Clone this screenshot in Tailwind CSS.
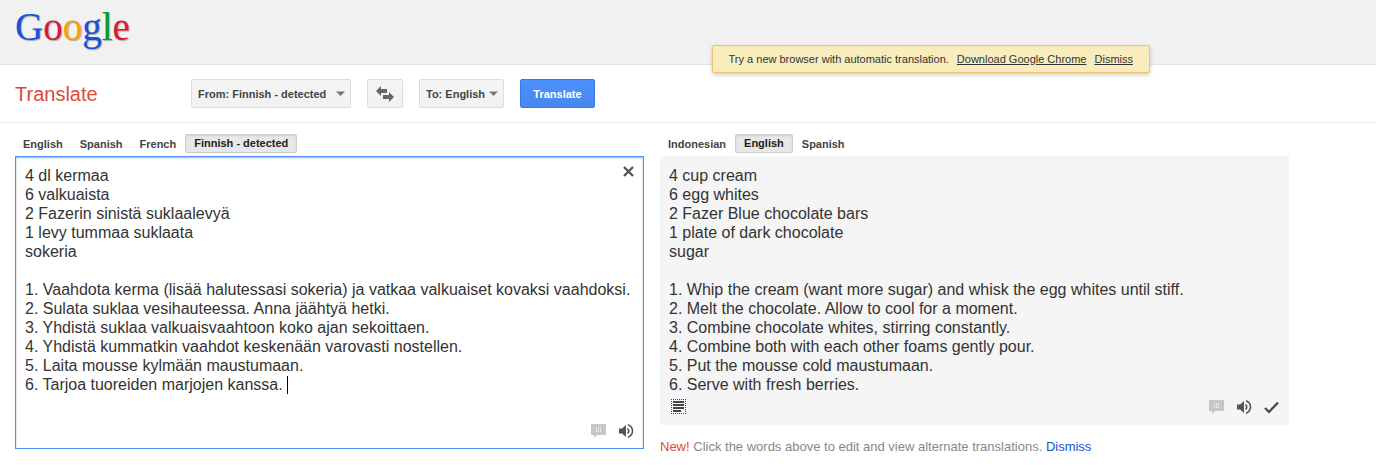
<!DOCTYPE html>
<html lang="en">
<head>
    <meta charset="UTF-8">
    <meta name="viewport" content="width=device-width, initial-scale=1.0">
    <title>Google Translate</title>
    <script src="https://cdn.jsdelivr.net/npm/@tailwindcss/browser@4"></script>
</head>
<body class="bg-white font-['Liberation_Sans',Arial,sans-serif] text-[#333]">
    <!-- Top bar -->
    <header class="relative h-[65px] bg-[#f1f1f1] border-b border-[#e5e5e5] px-[15px]">
        <a href="#" aria-label="Google" class="inline-block pt-[7px] font-['Liberation_Serif',serif] text-[39px] leading-10 text-shadow-[1px_1px_1px_rgb(0_0_0/0.3)]"><span class="text-[#1a50e0]">G</span><span class="text-[#dd1830]">o</span><span class="text-[#f5a300]">o</span><span class="text-[#1a50e0]">g</span><span class="text-[#0a9a1c]">l</span><span class="text-[#dd1830]">e</span></a>

        <div class="absolute top-[45px] right-[226px] flex h-7 items-center gap-2 rounded-xs border border-[#f0c36d] bg-[#f9edbe] px-4 text-[11px] whitespace-nowrap shadow-[0_2px_4px_rgba(0,0,0,0.2)]">
            <span>Try a new browser with automatic translation.</span>
            <a href="#" class="underline">Download Google Chrome</a>
            <button type="button" class="underline">Dismiss</button>
        </div>
    </header>

    <!-- Language toolbar -->
    <form class="flex h-[58px] items-center gap-4 border-b border-[#ebebeb] px-[15px] text-[11px] font-bold text-[#444]">
        <h1 class="w-40 text-xl font-normal text-[#dd4b39]">Translate</h1>
        <div class="relative">
            <select aria-label="From" class="h-[29px] w-40 appearance-none rounded-xs border border-[#dcdcdc] bg-linear-to-b from-[#f5f5f5] to-[#f1f1f1] pt-0.5 pl-1.5">
                <option>From: Finnish - detected</option>
            </select>
            <svg class="pointer-events-none absolute top-3 right-1.5 h-[5px] w-[9px]" viewBox="0 0 9 5" fill="#777"><path d="M0 0.5h9L4.5 5z"/></svg>
        </div>
        <button type="button" aria-label="Swap languages" class="flex h-[29px] w-9 items-center justify-center rounded-xs border border-[#dcdcdc] bg-linear-to-b from-[#f5f5f5] to-[#f1f1f1]">
            <svg class="h-4 w-[18px]" viewBox="0 0 18 16" fill="#666"><path d="M0 5L5 0V3H11V7H5V10zM18 11L13 6V9H7V13H13V16z"/></svg>
        </button>
        <div class="relative">
            <select aria-label="To" class="h-[29px] w-[85px] appearance-none rounded-xs border border-[#dcdcdc] bg-linear-to-b from-[#f5f5f5] to-[#f1f1f1] pt-0.5 pl-1.5">
                <option>To: English</option>
            </select>
            <svg class="pointer-events-none absolute top-3 right-1.5 h-[5px] w-[9px]" viewBox="0 0 9 5" fill="#777"><path d="M0 0.5h9L4.5 5z"/></svg>
        </div>
        <button type="button" class="h-[29px] w-[75px] rounded-xs border border-[#3079ed] bg-linear-to-b from-[#4d90fe] to-[#4787ed] pt-0.5 text-white">Translate</button>
    </form>

    <main class="grid grid-cols-2 items-start gap-4 pt-[11px] pr-[87px] pl-[15px]">
        <!-- Source -->
        <section>
            <div class="mb-[3px] flex h-[19px] gap-px text-[11px] font-bold text-[#444]">
                <button type="button" class="px-2 pt-0.5">English</button>
                <button type="button" class="px-2 pt-0.5">Spanish</button>
                <button type="button" class="px-2 pt-0.5">French</button>
                <button type="button" class="rounded-xs border border-[#ccc] bg-[#e8e8e8] px-2 text-[#222] inset-shadow-[0_1px_2px_rgba(0,0,0,0.1)]">Finnish - detected</button>
            </div>
            <div class="relative border border-[#4d90fe] inset-shadow-[0_1px_2px_rgba(0,0,0,0.3)]">
                <textarea aria-label="Source text" rows="12" class="block w-full resize-none overflow-hidden bg-transparent pt-[9px] pl-[9px] text-base leading-[19px] outline-none">4 dl kermaa
6 valkuaista
2 Fazerin sinistä suklaalevyä
1 levy tummaa suklaata
sokeria

1. Vaahdota kerma (lisää halutessasi sokeria) ja vatkaa valkuaiset kovaksi vaahdoksi.
2. Sulata suklaa vesihauteessa. Anna jäähtyä hetki.
3. Yhdistä suklaa valkuaisvaahtoon koko ajan sekoittaen.
4. Yhdistä kummatkin vaahdot keskenään varovasti nostellen.
5. Laita mousse kylmään maustumaan.
6. Tarjoa tuoreiden marjojen kanssa. </textarea>
                <!-- text cursor -->
                <span class="absolute top-[219px] left-[271px] h-[18px] w-px bg-black"></span>
                <button type="button" aria-label="Clear text" class="absolute top-[9px] right-[9px]">
                    <svg class="h-[11px] w-[11px]" viewBox="0 0 11 11" fill="none" stroke="#555" stroke-width="2.4"><path d="M1 1l9 9M10 1l-9 9"/></svg>
                </button>
                <div class="flex h-[54px] items-end justify-end gap-3 pr-[9px] pb-[9px]">
                    <button type="button" aria-label="Input tools">
                        <svg class="h-4 w-4" viewBox="0 0 16 16"><path fill="#c6c6c6" d="M1 1h15v11H7l-3 3v-3H1z"/><path stroke="#fff" stroke-dasharray="1 1" d="M6 4.5h5M6 6.5h5M6 8.5h5"/></svg>
                    </button>
                    <button type="button" aria-label="Listen">
                        <svg class="h-4 w-4" viewBox="0 0 16 16"><path fill="#555" d="M1 5.500h3L8 2v12L4 10.500H1z"/><path fill="none" stroke="#555" stroke-width="1.600" d="M9.500 5.500Q12 8 9.500 10.500M10 1.800Q14.500 3.500 14.500 8T10 14.200"/></svg>
                    </button>
                </div>
            </div>
        </section>

        <!-- Translation -->
        <section>
            <div class="mb-[3px] flex h-[19px] gap-px text-[11px] font-bold text-[#444]">
                <button type="button" class="px-2 pt-0.5">Indonesian</button>
                <button type="button" class="rounded-xs border border-[#ccc] bg-[#e8e8e8] px-2 text-[#222] inset-shadow-[0_1px_2px_rgba(0,0,0,0.1)]">English</button>
                <button type="button" class="px-2 pt-0.5">Spanish</button>
            </div>
            <div class="bg-[#f5f5f5] pt-2.5">
                <p class="px-[9px] text-base leading-[19px] whitespace-pre-line">4 cup cream
6 egg whites
2 Fazer Blue chocolate bars
1 plate of dark chocolate
sugar

1. Whip the cream (want more sugar) and whisk the egg whites until stiff.
2. Melt the chocolate. Allow to cool for a moment.
3. Combine chocolate whites, stirring constantly.
4. Combine both with each other foams gently pour.
5. Put the mousse cold maustumaan.
6. Serve with fresh berries.</p>
                <div class="flex h-[31px] items-start gap-3 pt-[5px] pr-[9px] pl-2.5">
                    <button type="button" aria-label="Show text alignment" class="mr-auto">
                        <svg class="h-4 w-4" viewBox="0 0 16 16" fill="none" stroke="#444"><path stroke-dasharray="1 1" d="M1 .5h15M1 14.5h15M1.500 0v15M15.500 0v15"/><path stroke-width="2" d="M3 3h11M3 6h11M3 9h11M3 12h8"/></svg>
                    </button>
                    <button type="button" aria-label="Input tools">
                        <svg class="h-4 w-4" viewBox="0 0 16 16"><path fill="#c6c6c6" d="M1 1h15v11H7l-3 3v-3H1z"/><path stroke="#fff" stroke-dasharray="1 1" d="M6 4.5h5M6 6.5h5M6 8.5h5"/></svg>
                    </button>
                    <button type="button" aria-label="Listen">
                        <svg class="h-4 w-4" viewBox="0 0 16 16"><path fill="#555" d="M1 5.500h3L8 2v12L4 10.500H1z"/><path fill="none" stroke="#555" stroke-width="1.600" d="M9.500 5.500Q12 8 9.500 10.500M10 1.800Q14.500 3.500 14.500 8T10 14.200"/></svg>
                    </button>
                    <button type="button" aria-label="Rate translation">
                        <svg class="h-4 w-4" viewBox="0 0 16 16" fill="none" stroke="#444" stroke-width="2.200"><path d="M1 9l4 4L14 3.500"/></svg>
                    </button>
                </div>
            </div>
            <p class="pt-3 text-[13px] leading-5 text-[#888]"><span class="text-[#dd4b39]">New!</span> Click the words above to edit and view alternate translations. <a href="#" class="text-[#1155cc]">Dismiss</a></p>
        </section>
    </main>
</body>
</html>
